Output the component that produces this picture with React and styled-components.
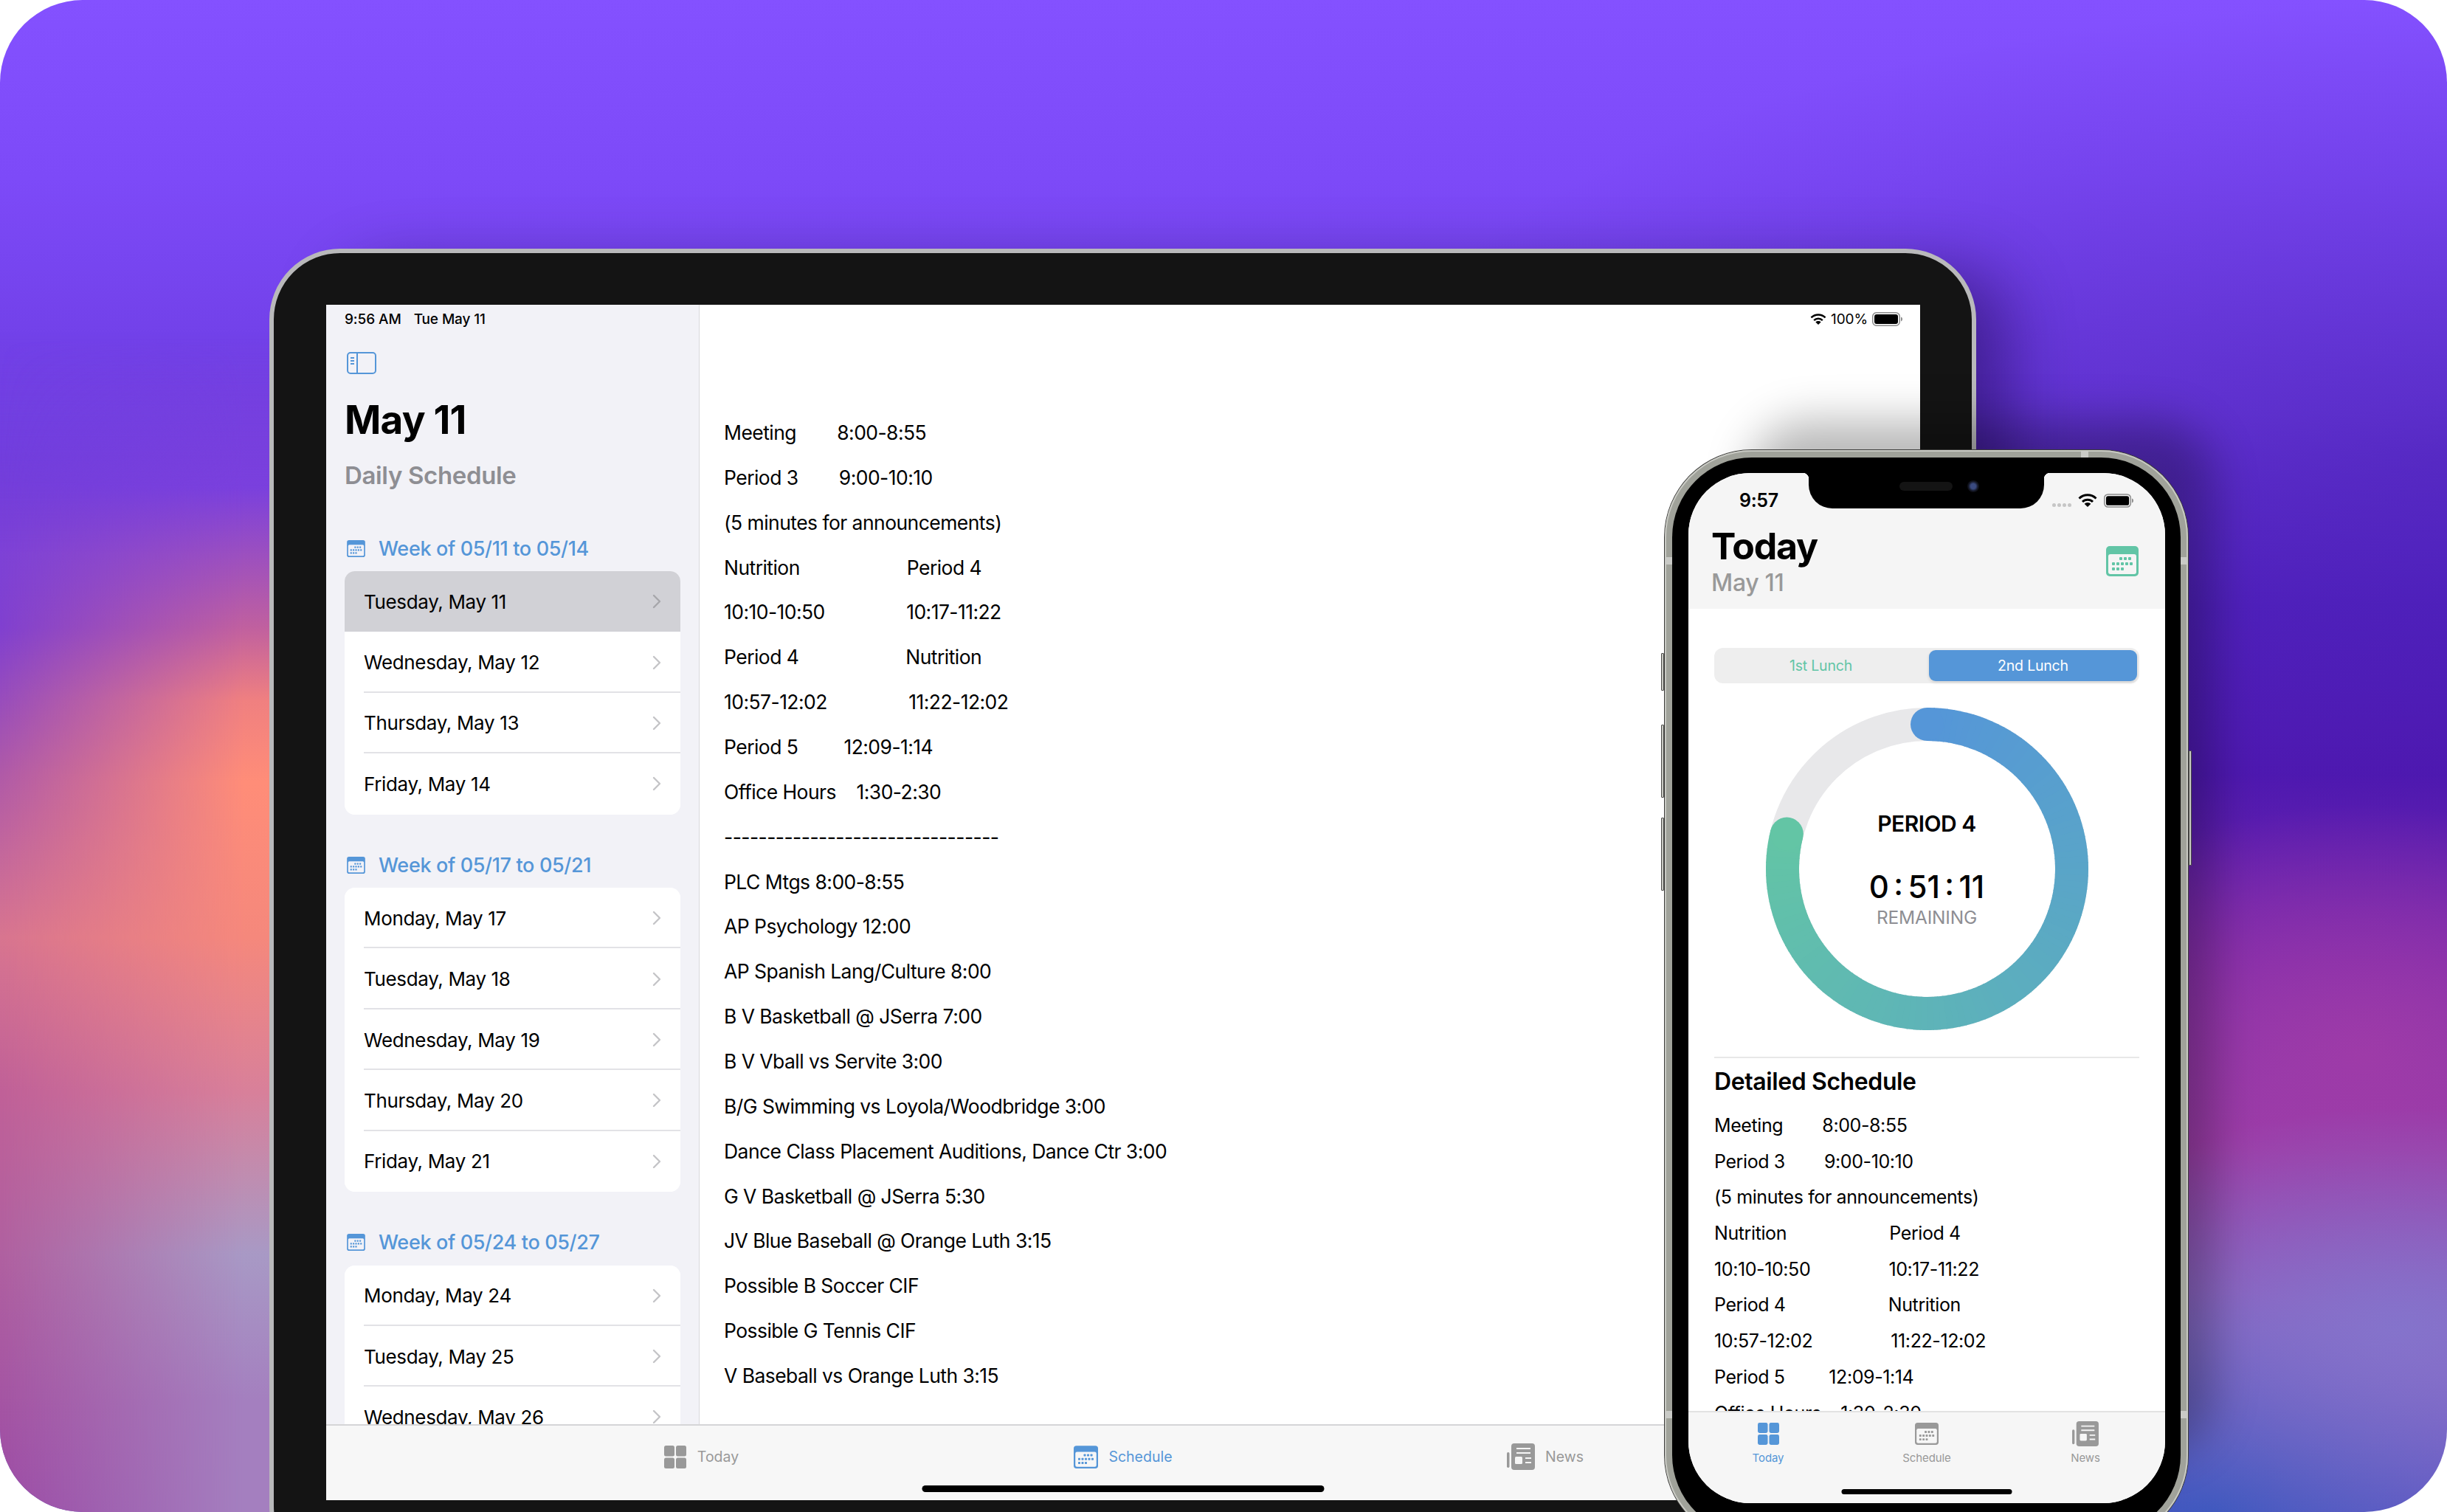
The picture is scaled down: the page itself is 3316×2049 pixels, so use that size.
import styled, { createGlobalStyle } from "styled-components";

const BLUE = "#5596d8";
const GREEN = "#62c5a6";
const GREY = "#999999";

const weeks = [
  {
    title: "Week of 05/11 to 05/14",
    days: ["Tuesday, May 11", "Wednesday, May 12", "Thursday, May 13", "Friday, May 14"],
  },
  {
    title: "Week of 05/17 to 05/21",
    days: ["Monday, May 17", "Tuesday, May 18", "Wednesday, May 19", "Thursday, May 20", "Friday, May 21"],
  },
  {
    title: "Week of 05/24 to 05/27",
    days: ["Monday, May 24", "Tuesday, May 25", "Wednesday, May 26", "Thursday, May 27"],
  },
];

const schedule = [
  "Meeting        8:00-8:55",
  "Period 3        9:00-10:10",
  "(5 minutes for announcements)",
  "Nutrition                     Period 4",
  "10:10-10:50                10:17-11:22",
  "Period 4                     Nutrition",
  "10:57-12:02                11:22-12:02",
  "Period 5         12:09-1:14",
  "Office Hours    1:30-2:30",
];

const events = [
  "--------------------------------",
  "PLC Mtgs 8:00-8:55",
  "AP Psychology 12:00",
  "AP Spanish Lang/Culture 8:00",
  "B V Basketball @ JSerra 7:00",
  "B V Vball vs Servite 3:00",
  "B/G Swimming vs Loyola/Woodbridge 3:00",
  "Dance Class Placement Auditions, Dance Ctr 3:00",
  "G V Basketball @ JSerra 5:30",
  "JV Blue Baseball @ Orange Luth 3:15",
  "Possible B Soccer CIF",
  "Possible G Tennis CIF",
  "V Baseball vs Orange Luth 3:15",
];

const GlobalStyle = createGlobalStyle`
  html, body {
    margin: 0;
    padding: 0;
    background: #fff;
  }
  body {
    font-family: Inter, "Liberation Sans", sans-serif;
    color: #000;
  }
`;

const Page = styled.div`
  width: 3316px;
  height: 2049px;
  overflow: hidden;
  background: #fff;
`;

const Backdrop = styled.main`
  position: relative;
  width: 3316px;
  height: 2049px;
  box-sizing: border-box;
  padding: 337px 0 0 365px;
  overflow: hidden;
  border-radius: 112px;
  background:
    radial-gradient(ellipse 500px 300px at 3250px 1800px, rgba(132, 116, 204, 0.95) 0%, rgba(132, 116, 204, 0) 100%),
    radial-gradient(ellipse 400px 300px at 3000px 2049px, rgba(60, 88, 190, 0.95) 0%, rgba(60, 88, 190, 0) 100%),
    radial-gradient(ellipse 500px 340px at 3200px 1430px, rgba(160, 60, 168, 0.9) 0%, rgba(160, 60, 168, 0) 100%),
    radial-gradient(ellipse 1500px 620px at 3316px 620px, rgba(60, 20, 160, 0.4) 0%, rgba(60, 20, 160, 0) 100%),
    linear-gradient(180deg, #8451ff 0, #7d4af8 240px, #6d3de2 560px, #5524c4 820px, #5019b2 1050px, #7a28ac 1300px, #9b3fa8 1560px, #8d62c0 1800px, #6458c4 2049px);

  /* colour band down the left edge, behind the tablet */
  &::before,
  &::after {
    content: "";
    position: absolute;
    top: 0;
    bottom: 0;
    left: 0;
    width: 430px;
  }
  &::before {
    background: linear-gradient(180deg, #7a44e0 600px, #8040d0 850px, #b05aa8 1050px, #d87590 1270px, #c06098 1480px, #b060a0 1700px, #9c4ca6 2049px);
    -webkit-mask-image: linear-gradient(180deg, transparent 450px, #000 750px);
    mask-image: linear-gradient(180deg, transparent 450px, #000 750px);
  }
  &::after {
    background: linear-gradient(180deg, rgba(122, 64, 221, 0) 460px, #7a40dd 660px, #c0609f 850px, #f08080 950px, #ff8d78 1060px, #f5887c 1270px, #d8809a 1480px, #a899c5 1700px, #a47fbf 1900px);
    -webkit-mask-image: linear-gradient(90deg, transparent 0, #000 330px);
    mask-image: linear-gradient(90deg, transparent 0, #000 330px);
  }
`;

const Tablet = styled.section`
  position: relative;
  z-index: 1;
  width: 2313px;
  height: 1800px;
  box-sizing: border-box;
  padding: 70px 70px 0 71px;
  background: #141414;
  border: 6px solid #b9b9bb;
  border-radius: 96px;
  box-shadow: 70px 0 90px -30px rgba(20, 0, 60, 0.45);
`;

const TabletScreen = styled.div`
  width: 2160px;
  height: 1620px;
  background: #fff;
  display: flex;
  flex-direction: column;
  overflow: hidden;
  position: relative;
`;

const SplitView = styled.div`
  flex: 1;
  min-height: 0;
  display: flex;
`;

const Sidebar = styled.aside`
  width: 506px;
  box-sizing: border-box;
  padding: 0 25px;
  background: #f2f2f7;
  border-right: 1px solid #d8d8dc;
  overflow: hidden;
`;

const StatusLine = styled.div`
  height: 38px;
  display: flex;
  align-items: center;
  gap: 17px;
  font-size: 19px;
  font-weight: 500;
  letter-spacing: -0.1px;
`;

const ToggleButton = styled.div`
  margin-top: 26px;
  padding-left: 3px;
  height: 30px;
  display: flex;
`;

const LargeTitle = styled.h1`
  margin: 30px 0 0;
  font-size: 53px;
  line-height: 64px;
  font-weight: 700;
  letter-spacing: -0.8px;
`;

const Subtitle = styled.h2`
  margin: 21px 0 0;
  font-size: 33px;
  line-height: 44px;
  font-weight: 600;
  letter-spacing: -0.35px;
  color: #8e8e93;
`;

const WeekSection = styled.section`
  margin-top: 48.5px;
  &:first-of-type {
    margin-top: 57px;
  }
`;

const WeekHeader = styled.div`
  height: 40px;
  margin-bottom: 11px;
  display: flex;
  align-items: center;
  gap: 18px;
  padding-left: 3px;
  font-size: 27px;
  font-weight: 500;
  letter-spacing: -0.35px;
  color: ${BLUE};
`;

const DayCard = styled.div`
  background: #fff;
  border-radius: 14px;
  overflow: hidden;
`;

const DayRow = styled.div`
  position: relative;
  height: 82.4px;
  box-sizing: border-box;
  padding: 0 26px;
  display: flex;
  align-items: center;
  justify-content: space-between;
  font-size: 26px;
  letter-spacing: -0.35px;
  background: ${(p) => (p.$selected ? "#d1d1d6" : "#fff")};
  &:not(:last-child)::after {
    content: "";
    position: absolute;
    left: 26px;
    right: 0;
    bottom: 0;
    height: 2px;
    background: ${(p) => (p.$selected ? "transparent" : "#e2e2e6")};
  }
`;

const MainPane = styled.div`
  flex: 1;
  min-width: 0;
  box-sizing: border-box;
  padding: 0 24px 0 33px;
  overflow: hidden;
`;

const TopRight = styled.div`
  height: 38px;
  display: flex;
  justify-content: flex-end;
  align-items: center;
  gap: 6px;
  font-size: 19px;
  letter-spacing: -0.1px;
`;

const ScheduleText = styled.div`
  margin-top: 105px;
`;

const TextLine = styled.div`
  white-space: pre;
  height: ${(p) => (p.$phone ? 48.7 : 60.86)}px;
  line-height: ${(p) => (p.$phone ? 48.7 : 60.86)}px;
  font-size: ${(p) => (p.$phone ? 25 : 26.5)}px;
  letter-spacing: ${(p) => (p.$phone ? -0.4 : -0.55)}px;
`;

const TabletTabs = styled.nav`
  position: relative;
  height: 103px;
  box-sizing: border-box;
  padding-top: 23px;
  display: grid;
  grid-template-columns: repeat(3, 572px);
  justify-content: center;
  background: #f7f7f7;
  border-top: 2px solid #d5d5d7;
`;

const WideTab = styled.div`
  height: 38px;
  display: flex;
  align-items: center;
  justify-content: center;
  gap: 14px;
  font-size: 19.5px;
  color: ${(p) => (p.$active ? BLUE : GREY)};
`;

const HomeBar = styled.div`
  position: absolute;
  left: 50%;
  bottom: ${(p) => p.$bottom}px;
  transform: translateX(-50%);
  width: ${(p) => p.$width}px;
  height: ${(p) => p.$height}px;
  border-radius: 6px;
  background: #000;
`;

const Phone = styled.section`
  position: absolute;
  z-index: 2;
  left: 2256px;
  top: 610px;
  width: 709px;
  height: 1480px;
  box-sizing: border-box;
  padding: 10px;
  border-radius: 118px;
  background: #a0a29a;
  box-shadow:
    0 0 0 1px #3c3c3a,
    inset 0 0 0 2px #c8c9c3,
    75px -80px 60px -40px rgba(0, 0, 0, 0.28);
`;

const Bezel = styled.div`
  height: 100%;
  box-sizing: border-box;
  padding: 21px 21px 33px 22px;
  background: #000;
  border-radius: 108px;
`;

const PhoneScreen = styled.div`
  position: relative;
  height: 1396px;
  display: flex;
  flex-direction: column;
  overflow: hidden;
  background: #fff;
  border-radius: 84px;
`;

const AntennaBand = styled.span`
  position: absolute;
  width: 10px;
  height: 10px;
  background: #c9cac6;
  ${(p) => (p.$side === "top" ? "top: 0;" : "")}
  ${(p) => (p.$side === "left" ? "left: 0;" : "")}
  ${(p) => (p.$side === "right" ? "right: 0;" : "")}
`;

const SideButton = styled.span`
  position: absolute;
  width: 4px;
  background: #c8c9c3;
  border: 1px solid #4a4a48;
  box-sizing: border-box;
  border-radius: 1px;
  ${(p) => (p.$right ? "right: -5px;" : "left: -5px;")}
`;

const Notch = styled.div`
  position: absolute;
  top: 0;
  left: 163px;
  width: 319px;
  height: 48px;
  background: #000;
  border-radius: 0 0 32px 32px;

  &::before,
  &::after {
    content: "";
    position: absolute;
    top: 0;
    width: 8px;
    height: 8px;
  }
  &::before {
    left: -8px;
    background: radial-gradient(circle at 0 100%, transparent 8px, #000 8.5px);
  }
  &::after {
    right: -8px;
    background: radial-gradient(circle at 100% 100%, transparent 8px, #000 8.5px);
  }
`;

const Speaker = styled.span`
  position: absolute;
  left: 123px;
  top: 12px;
  width: 72px;
  height: 12px;
  border-radius: 6px;
  background: #141414;
`;

const Camera = styled.span`
  position: absolute;
  left: 215px;
  top: 10px;
  width: 16px;
  height: 16px;
  border-radius: 50%;
  background: radial-gradient(circle, #3a4a80 0 30%, #10121c 60%);
`;

const PhoneHeader = styled.header`
  height: 184px;
  flex: none;
  box-sizing: border-box;
  padding: 17px 36px 0 31px;
  background: #f5f5f5;
`;

const PhoneStatus = styled.div`
  height: 40px;
  padding: 0 7px 0 38px;
  display: flex;
  align-items: center;
  justify-content: space-between;
  font-size: 25px;
  font-weight: 600;
  letter-spacing: -0.3px;
`;

const SignalGroup = styled.div`
  display: flex;
  align-items: center;
  gap: 9px;
`;

const SignalDots = styled.div`
  display: flex;
  gap: 2px;
  margin-top: 12px;
  span {
    width: 5px;
    height: 5px;
    border-radius: 50%;
    background: #c6c6c6;
  }
`;

const TitleRow = styled.div`
  margin-top: 12px;
  display: flex;
  justify-content: space-between;
  align-items: center;
`;

const PhoneTitle = styled.h1`
  margin: 0;
  font-size: 50px;
  line-height: 60px;
  font-weight: 700;
  letter-spacing: -1.2px;
`;

const PhoneDate = styled.div`
  font-size: 32px;
  line-height: 40px;
  font-weight: 500;
  letter-spacing: -0.3px;
  color: ${GREY};
`;

const PhoneBody = styled.div`
  flex: 1;
  min-height: 0;
  box-sizing: border-box;
  padding: 53px 35px 0;
  overflow: hidden;
`;

const Segmented = styled.div`
  height: 48px;
  box-sizing: border-box;
  padding: 3px;
  display: grid;
  grid-template-columns: 1fr 282px;
  background: #eeeeee;
  border-radius: 12px;
`;

const Segment = styled.div`
  display: flex;
  align-items: center;
  justify-content: center;
  padding-right: ${(p) => (p.$active ? 0 : 5)}px;
  border-radius: 9px;
  font-size: 19.5px;
  letter-spacing: -0.2px;
  color: ${(p) => (p.$active ? "#fff" : GREEN)};
  background: ${(p) => (p.$active ? BLUE : "transparent")};
  box-shadow: ${(p) => (p.$active ? "0 2px 4px rgba(0, 0, 0, 0.12)" : "none")};
`;

const RingWrap = styled.div`
  position: relative;
  width: 437px;
  height: 437px;
  margin: 33px auto 0;
  svg {
    display: block;
  }
`;

const RingLabel = styled.div`
  position: absolute;
  inset: 0;
  display: flex;
  flex-direction: column;
  align-items: center;
`;

const PeriodName = styled.div`
  margin-top: 137px;
  font-size: 30px;
  line-height: 40px;
  font-weight: 600;
  letter-spacing: -0.5px;
`;

const Countdown = styled.div`
  margin-top: 41px;
  white-space: pre;
  font-size: 42px;
  line-height: 50px;
  font-weight: 500;
  word-spacing: -4.75px;
`;

const RemainingLabel = styled.div`
  margin-top: 1px;
  font-size: 24.5px;
  line-height: 30px;
  letter-spacing: -0.2px;
  color: #8e8e93;
`;

const Divider = styled.hr`
  margin: 36px 0 0;
  border: 0;
  height: 2px;
  background: #e8e8e8;
`;

const DetailTitle = styled.h3`
  margin: 12px 0 15px;
  font-size: 32px;
  line-height: 40px;
  font-weight: 600;
  letter-spacing: -0.4px;
`;

const PhoneTabs = styled.nav`
  position: relative;
  height: 125px;
  flex: none;
  box-sizing: border-box;
  padding-top: 10px;
  display: grid;
  grid-template-columns: repeat(3, 215px);
  justify-content: center;
  background: #f6f6f6;
  border-top: 2px solid #e2e2e2;
`;

const NarrowTab = styled.div`
  display: flex;
  flex-direction: column;
  align-items: center;
  font-size: 15px;
  letter-spacing: -0.1px;
  color: ${(p) => (p.$active ? BLUE : GREY)};
  span {
    margin-top: 4px;
  }
`;

const IconSlot = styled.div`
  height: 38px;
  display: flex;
  align-items: center;
`;

const ChevronSlot = styled.div`
  display: flex;
  color: ${(p) => (p.$selected ? "#a6a6ab" : "#c4c4c7")};
`;

const Chevron = () => (
  <svg width="12" height="20" viewBox="0 0 12 20">
    <path d="M2 2l8 8-8 8" fill="none" stroke="currentColor" strokeWidth="2.4" strokeLinecap="round" strokeLinejoin="round" />
  </svg>
);

const SidebarIcon = () => (
  <svg width="40" height="30" viewBox="0 0 40 30">
    <rect x="1" y="1" width="38" height="28" rx="4" fill="none" stroke={BLUE} strokeWidth="2" />
    <path d="M14 1v28" stroke={BLUE} strokeWidth="2" />
    <path d="M5 8h5M5 12h5M5 16h5" stroke={BLUE} strokeWidth="2" />
  </svg>
);

const calendarDots = [
  [20, 17], [26, 17], [32, 17],
  [10, 24], [16, 24], [22, 24], [28, 24], [34, 24],
  [10, 31], [16, 31], [22, 31],
];

const CalendarIcon = ({ color, width, height, inner = "#f5f5f5" }) => (
  <svg width={width} height={height} viewBox="0 0 44 41">
    <rect width="44" height="41" rx="5" fill={color} />
    <rect x="3" y="11" width="38" height="27" rx="3" fill={inner} />
    {calendarDots.map(([x, y]) => (
      <rect key={`${x}-${y}`} x={x - 2} y={y - 2} width="4" height="4" rx="1" fill={color} />
    ))}
  </svg>
);

const GridIcon = ({ color, width, height }) => (
  <svg width={width} height={height} viewBox="0 0 30 31">
    <rect width="14" height="14.5" rx="2.5" fill={color} />
    <rect x="16" width="14" height="14.5" rx="2.5" fill={color} />
    <rect y="16.5" width="14" height="14.5" rx="2.5" fill={color} />
    <rect x="16" y="16.5" width="14" height="14.5" rx="2.5" fill={color} />
  </svg>
);

const NewsIcon = ({ width, height }) => (
  <svg width={width} height={height} viewBox="0 0 38 36">
    <rect x="0" y="12" width="3.5" height="21" rx="1.7" fill={GREY} />
    <rect x="6" y="0" width="32" height="36" rx="4" fill={GREY} />
    <path d="M13 7h19M13 13h19" stroke="#f6f6f6" strokeWidth="2" />
    <rect x="11" y="18" width="10" height="10" rx="1.5" fill="#f6f6f6" />
    <path d="M25 20h8M25 26h8" stroke="#f6f6f6" strokeWidth="2" />
  </svg>
);

const WifiIcon = ({ width, height }) => (
  <svg width={width} height={height} viewBox="0 0 26 18">
    <path d="M1.5 6.5a16.5 16.5 0 0 1 23 0" fill="none" stroke="#000" strokeWidth="3" />
    <path d="M6 11a10 10 0 0 1 14 0" fill="none" stroke="#000" strokeWidth="3" />
    <path d="M13 18l-4.4-4.2a6.3 6.3 0 0 1 8.8 0z" fill="#000" />
  </svg>
);

const BatteryIcon = ({ width, height }) => (
  <svg width={width} height={height} viewBox="0 0 41 19">
    <rect x="0.75" y="0.75" width="36.5" height="17.5" rx="5" fill="none" stroke="#8a8a8a" strokeWidth="1.5" />
    <rect x="3" y="3" width="32" height="13" rx="3" fill="#000" />
    <path d="M39 6.5c1.4.4 2 1.6 2 3s-.6 2.6-2 3z" fill="#8a8a8a" />
  </svg>
);

// ring runs clockwise from 12 o'clock, colour blended along the sweep
const RING_CENTER = 218.5;
const RING_RADIUS = 196;
const RING_SWEEP = 284;

const mix = (t) => {
  const from = [0x55, 0x96, 0xd8];
  const to = [0x63, 0xc5, 0xa5];
  const c = from.map((v, i) => Math.round(v + (to[i] - v) * t));
  return `rgb(${c.join(",")})`;
};

const polar = (deg) => {
  const rad = ((deg - 90) * Math.PI) / 180;
  return [RING_CENTER + RING_RADIUS * Math.cos(rad), RING_CENTER + RING_RADIUS * Math.sin(rad)];
};

const ProgressRing = () => {
  const steps = 120;
  const arcs = [];
  for (let i = 0; i < steps; i++) {
    const a = (RING_SWEEP * i) / steps;
    const b = (RING_SWEEP * (i + 1)) / steps + 0.4;
    const [x1, y1] = polar(a);
    const [x2, y2] = polar(Math.min(b, RING_SWEEP));
    arcs.push(
      <path
        key={i}
        d={`M${x1} ${y1}A${RING_RADIUS} ${RING_RADIUS} 0 0 1 ${x2} ${y2}`}
        fill="none"
        stroke={mix(i / steps)}
        strokeWidth="45"
      />
    );
  }
  const [ex, ey] = polar(RING_SWEEP);
  return (
    <svg width="437" height="437" viewBox="0 0 437 437">
      <circle cx={RING_CENTER} cy={RING_CENTER} r={RING_RADIUS} fill="none" stroke="#e8e8ea" strokeWidth="45" />
      {arcs}
      <circle cx={RING_CENTER} cy={RING_CENTER - RING_RADIUS} r="22.5" fill={mix(0)} />
      <circle cx={ex} cy={ey} r="22.5" fill={mix(1)} />
    </svg>
  );
};

const bands = [
  { side: "top", style: { left: 564 } },
  { side: "left", style: { top: 145 } },
  { side: "right", style: { top: 145 } },
  { side: "left", style: { top: 1302 } },
  { side: "right", style: { top: 1302 } },
];

const sideButtons = [
  { top: 275, height: 51 },
  { top: 372, height: 99 },
  { top: 498, height: 99 },
  { top: 407, height: 156, right: true },
];

export default function App() {
  return (
    <Page>
      <GlobalStyle />
      <Backdrop>
        <Tablet>
          <TabletScreen>
            <SplitView>
              <Sidebar>
                <StatusLine>
                  <span>9:56 AM</span>
                  <span>Tue May 11</span>
                </StatusLine>
                <ToggleButton>
                  <SidebarIcon />
                </ToggleButton>
                <LargeTitle>May 11</LargeTitle>
                <Subtitle>Daily Schedule</Subtitle>
                {weeks.map((week, w) => (
                  <WeekSection key={week.title}>
                    <WeekHeader>
                      <CalendarIcon color={BLUE} width={25} height={23} inner="#f2f2f7" />
                      {week.title}
                    </WeekHeader>
                    <DayCard>
                      {week.days.map((day, d) => (
                        <DayRow key={day} $selected={w === 0 && d === 0}>
                          <span>{day}</span>
                          <ChevronSlot $selected={w === 0 && d === 0}>
                            <Chevron />
                          </ChevronSlot>
                        </DayRow>
                      ))}
                    </DayCard>
                  </WeekSection>
                ))}
              </Sidebar>
              <MainPane>
                <TopRight>
                  <WifiIcon width={22} height={15} />
                  <span>100%</span>
                  <BatteryIcon width={41} height={19} />
                </TopRight>
                <ScheduleText>
                  {[...schedule, ...events].map((line, i) => (
                    <TextLine key={i}>{line}</TextLine>
                  ))}
                </ScheduleText>
              </MainPane>
            </SplitView>
            <TabletTabs>
              <WideTab>
                <GridIcon color={GREY} width={32} height={31} />
                Today
              </WideTab>
              <WideTab $active>
                <CalendarIcon color={BLUE} width={33} height={31} inner="#f7f7f7" />
                Schedule
              </WideTab>
              <WideTab>
                <NewsIcon width={38} height={36} />
                News
              </WideTab>
              <HomeBar $width={545} $height={9} $bottom={11} />
            </TabletTabs>
          </TabletScreen>
        </Tablet>

        <Phone>
          {bands.map((b, i) => (
            <AntennaBand key={i} $side={b.side} style={b.style} />
          ))}
          {sideButtons.map((b, i) => (
            <SideButton key={i} $right={b.right} style={{ top: b.top, height: b.height }} />
          ))}
          <Bezel>
            <PhoneScreen>
              <Notch>
                <Speaker />
                <Camera />
              </Notch>
              <PhoneHeader>
                <PhoneStatus>
                  <span>9:57</span>
                  <SignalGroup>
                    <SignalDots>
                      <span />
                      <span />
                      <span />
                      <span />
                    </SignalDots>
                    <WifiIcon width={26} height={18} />
                    <BatteryIcon width={40} height={19} />
                  </SignalGroup>
                </PhoneStatus>
                <TitleRow>
                  <div>
                    <PhoneTitle>Today</PhoneTitle>
                    <PhoneDate>May 11</PhoneDate>
                  </div>
                  <CalendarIcon color={GREEN} width={44} height={41} />
                </TitleRow>
              </PhoneHeader>
              <PhoneBody>
                <Segmented>
                  <Segment>1st Lunch</Segment>
                  <Segment $active>2nd Lunch</Segment>
                </Segmented>
                <RingWrap>
                  <ProgressRing />
                  <RingLabel>
                    <PeriodName>PERIOD 4</PeriodName>
                    <Countdown>0 : 51 : 11</Countdown>
                    <RemainingLabel>REMAINING</RemainingLabel>
                  </RingLabel>
                </RingWrap>
                <Divider />
                <DetailTitle>Detailed Schedule</DetailTitle>
                {schedule.map((line, i) => (
                  <TextLine key={i} $phone>
                    {line}
                  </TextLine>
                ))}
              </PhoneBody>
              <PhoneTabs>
                <NarrowTab $active>
                  <IconSlot>
                    <GridIcon color={BLUE} width={29} height={30} />
                  </IconSlot>
                  <span>Today</span>
                </NarrowTab>
                <NarrowTab>
                  <IconSlot>
                    <CalendarIcon color={GREY} width={32} height={30} inner="#f6f6f6" />
                  </IconSlot>
                  <span>Schedule</span>
                </NarrowTab>
                <NarrowTab>
                  <IconSlot>
                    <NewsIcon width={36} height={34} />
                  </IconSlot>
                  <span>News</span>
                </NarrowTab>
                <HomeBar $width={231} $height={7} $bottom={12} />
              </PhoneTabs>
            </PhoneScreen>
          </Bezel>
        </Phone>
      </Backdrop>
    </Page>
  );
}
